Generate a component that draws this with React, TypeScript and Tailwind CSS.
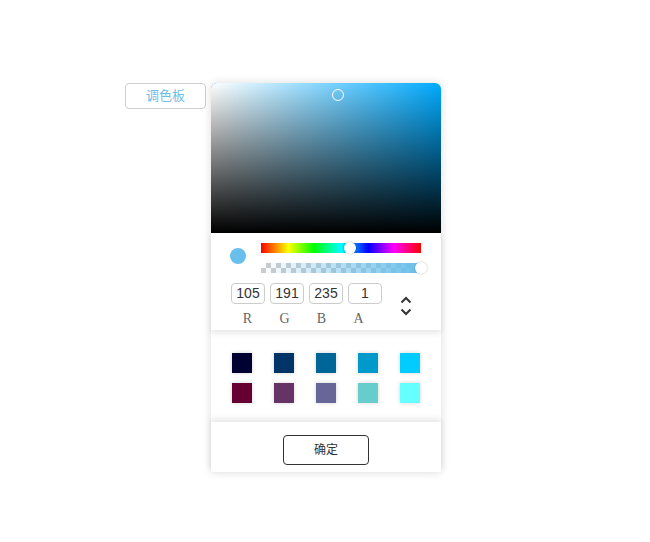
import React from "react"

const swatches = [
  ["#000033", "#003366", "#006699", "#0099cc", "#00ccff"],
  ["#660033", "#663366", "#666699", "#66cccc", "#66ffff"],
]

const rgba = [
  { label: "R", value: "105" },
  { label: "G", value: "191" },
  { label: "B", value: "235" },
  { label: "A", value: "1" },
]

const checker =
  "bg-[linear-gradient(45deg,#ccc_25%,transparent_25%,transparent_75%,#ccc_75%),linear-gradient(45deg,#ccc_25%,transparent_25%,transparent_75%,#ccc_75%)] bg-[length:10px_10px] bg-[position:0_0,5px_5px]"

export default function App() {
  return (
    <div className="min-h-screen w-full bg-white font-['Liberation_Sans','Noto_Sans_CJK_SC',sans-serif]">
      <div className="flex items-start gap-[5px] pl-[125px] pt-[83px]">
        {/* Trigger */}
        <button
          type="button"
          className="h-[26px] w-[81px] rounded-[4px] border border-[#cfcfcf] bg-white text-[13px] text-[#6bbde8]"
        >
          调色板
        </button>

        {/* Panel */}
        <div className="flex w-[230px] flex-col rounded-t-[6px] bg-white shadow-[0_0_10px_rgba(0,0,0,0.14)]">
          {/* Saturation / value area */}
          <div className="relative h-[150px] overflow-hidden rounded-t-[6px] bg-[#00aaff]">
            <div className="absolute inset-0 bg-gradient-to-r from-white to-transparent" />
            <div className="absolute inset-0 bg-gradient-to-b from-transparent to-black" />
            <div className="absolute left-[121px] top-[6px] h-[12px] w-[12px] rounded-full border-[1.5px] border-white" />
          </div>

          {/* Sliders + inputs */}
          <div className="relative z-10 h-[97px] bg-white pl-[19px] pt-[10px] shadow-[0_3px_6px_rgba(0,0,0,0.1)]">
            <div className="flex items-start gap-[15px]">
              <div className="mt-[5px] h-[16px] w-[16px] rounded-full bg-[#69bfeb]" />
              <div className="flex flex-col gap-[10px]">
                <div className="relative h-[10px] w-[160px] bg-[linear-gradient(to_right,#f00_0%,#ff0_17%,#0f0_33%,#0ff_50%,#00f_67%,#f0f_83%,#f00_100%)]">
                  <div className="absolute left-[83px] top-[-1px] h-[12px] w-[12px] rounded-full bg-white shadow-[0_0_2px_rgba(0,0,0,0.3)]" />
                </div>
                <div className={`relative h-[10px] w-[160px] ${checker}`}>
                  <div className="absolute inset-0 bg-gradient-to-r from-[rgba(105,191,235,0)] to-[#69bfeb]" />
                  <div className="absolute left-[154px] top-[-1px] h-[12px] w-[12px] rounded-full bg-white shadow-[0_0_2px_rgba(0,0,0,0.3)]" />
                </div>
              </div>
            </div>

            <div className="mt-[10px] flex items-start">
              <div className="flex flex-col">
                <div className="ml-[1px] flex gap-[5px]">
                  {rgba.map((c) => (
                    <div
                      key={c.label}
                      className="flex h-[21px] w-[34px] items-center justify-center rounded-[4px] border border-[#cccccc] text-[14px] text-[#333]"
                    >
                      {c.value}
                    </div>
                  ))}
                </div>
                <div className="-ml-[1px] mt-[7px] flex">
                  {rgba.map((c) => (
                    <span
                      key={c.label}
                      className="w-[37px] text-center font-['Liberation_Serif',serif] text-[14px] leading-[16px] text-[#666]"
                    >
                      {c.label}
                    </span>
                  ))}
                </div>
              </div>
              <div className="ml-[18px] mt-[13px] flex flex-col items-center gap-[4px] text-[#333]">
                <svg width="12" height="8" viewBox="0 0 12 8" fill="none">
                  <path d="M1.5 6.5 6 2l4.5 4.5" stroke="currentColor" strokeWidth="2" />
                </svg>
                <svg width="12" height="8" viewBox="0 0 12 8" fill="none">
                  <path d="M1.5 1.5 6 6l4.5-4.5" stroke="currentColor" strokeWidth="2" />
                </svg>
              </div>
            </div>
          </div>

          {/* Preset swatches */}
          <div className="flex h-[92px] flex-col gap-[10px] bg-white pl-[21px] pt-[23px]">
            {swatches.map((row, i) => (
              <div key={i} className="flex gap-[22px]">
                {row.map((c) => (
                  <div
                    key={c}
                    className="h-[20px] w-[20px] shadow-[0_0_4px_rgba(0,0,0,0.18)]"
                    style={{ backgroundColor: c }}
                  />
                ))}
              </div>
            ))}
          </div>

          {/* Footer */}
          <div className="relative z-10 flex h-[50px] justify-center bg-white pt-[13px] shadow-[0_-3px_6px_rgba(0,0,0,0.1)]">
            <button
              type="button"
              className="h-[30px] w-[86px] rounded-[4px] border border-[#333] bg-white text-[12px] text-[#333]"
            >
              确定
            </button>
          </div>
        </div>
      </div>
    </div>
  )
}
